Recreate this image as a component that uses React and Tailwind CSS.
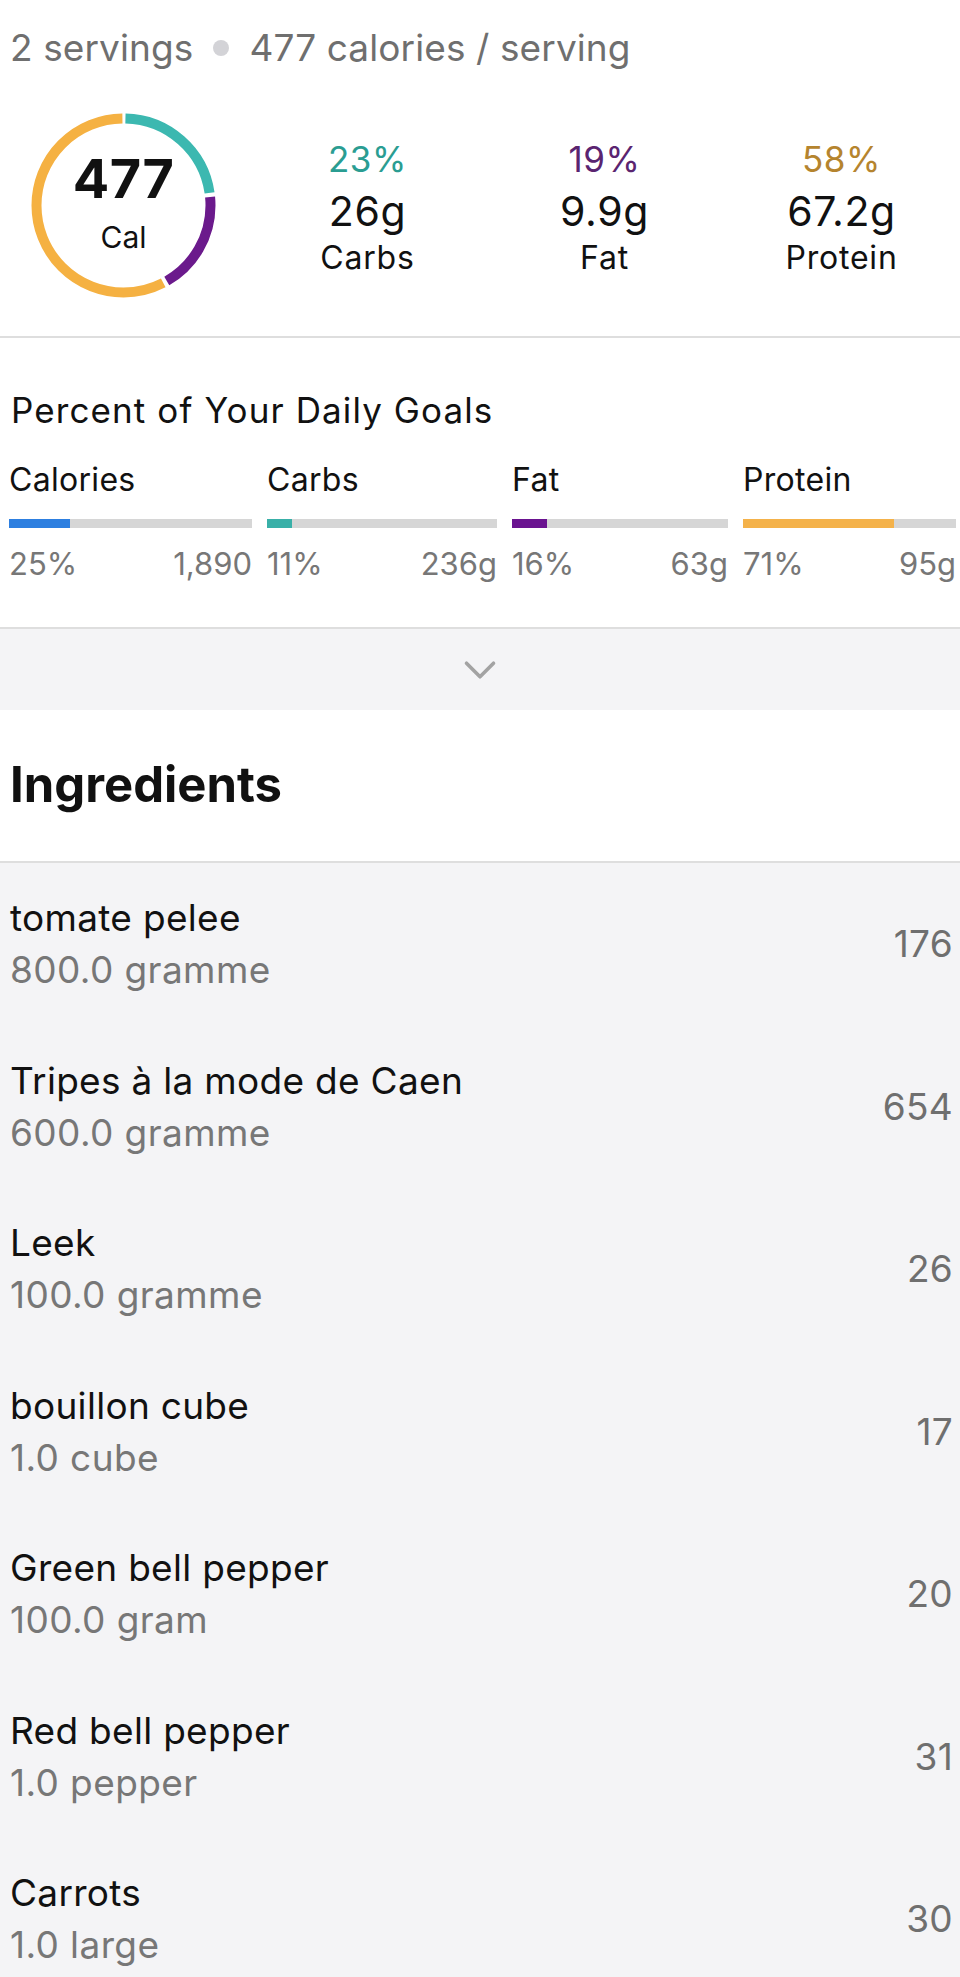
import { ChevronDown } from 'lucide-react'

const macros = [
  { pct: '23%', grams: '26g', label: 'Carbs', color: 'text-[#2a9d92]' },
  { pct: '19%', grams: '9.9g', label: 'Fat', color: 'text-[#5a2470]' },
  { pct: '58%', grams: '67.2g', label: 'Protein', color: 'text-[#b5842e]' },
]

const goals = [
  { label: 'Calories', pct: 25, goal: '1,890', fill: 'bg-[#2d7fe0]', width: 'w-[243px]' },
  { label: 'Carbs', pct: 11, goal: '236g', fill: 'bg-[#39b0a8]', width: 'w-[230px]' },
  { label: 'Fat', pct: 16, goal: '63g', fill: 'bg-[#6a1390]', width: 'w-[216px]' },
  { label: 'Protein', pct: 71, goal: '95g', fill: 'bg-[#f4b24a]', width: 'w-[213px]' },
]

const ingredients = [
  { name: 'tomate pelee', amount: '800.0 gramme', cal: 176 },
  { name: 'Tripes à la mode de Caen', amount: '600.0 gramme', cal: 654 },
  { name: 'Leek', amount: '100.0 gramme', cal: 26 },
  { name: 'bouillon cube', amount: '1.0 cube', cal: 17 },
  { name: 'Green bell pepper', amount: '100.0 gram', cal: 20 },
  { name: 'Red bell pepper', amount: '1.0 pepper', cal: 31 },
  { name: 'Carrots', amount: '1.0 large', cal: 30 },
]

// ring segments: carbs, fat, protein (share of calories)
const segments = [
  { share: 0.23, color: '#3cb8b0' },
  { share: 0.19, color: '#6b1a8c' },
  { share: 0.58, color: '#f5b142' },
]

function CalorieRing() {
  const r = 87
  const c = 2 * Math.PI * r
  const gap = 4
  let start = 0
  return (
    <div className="relative w-[185px] h-[185px]">
      <svg width="185" height="185" viewBox="0 0 185 185" className="-rotate-90">
        {segments.map((s) => {
          const len = s.share * c
          const el = (
            <circle
              key={s.color}
              cx="92.5"
              cy="92.5"
              r={r}
              fill="none"
              stroke={s.color}
              strokeWidth="10"
              strokeDasharray={`${len - gap} ${c}`}
              strokeDashoffset={-(start + gap / 2)}
            />
          )
          start += len
          return el
        })}
      </svg>
      <div className="absolute inset-0 flex flex-col items-center justify-center pb-[4px]">
        <span className="text-[54px] leading-[56px] font-bold text-[#111] tracking-[0.3px]">477</span>
        <span className="text-[30px] leading-[40px] mt-[10px] text-[#111]">Cal</span>
      </div>
    </div>
  )
}

export default function App() {
  return (
    <div className="bg-white font-['Inter',sans-serif] text-[#111] min-h-[1977px]">
      {/* summary */}
      <div className="pt-[24px] pb-[38px] border-b-2 border-[#dedede]">
        <div className="flex items-center px-[10px] text-[37px] leading-[48px] text-[#6f6f6f] tracking-[0.1px]">
          <span>2 servings</span>
          <span className="w-[16px] h-[16px] rounded-full bg-[#d3d3d7] mx-[20px]" />
          <span>477 calories / serving</span>
        </div>
        <div className="flex items-center mt-[41px]">
          <div className="w-[249px] pl-[31px]">
            <CalorieRing />
          </div>
          {macros.map((m) => (
            <div key={m.label} className="flex-1 flex flex-col items-center">
              <span className={`text-[35px] leading-[46px] tracking-[0.6px] ${m.color}`}>{m.pct}</span>
              <span className="text-[41px] leading-[58px] tracking-[0.6px]">{m.grams}</span>
              <span className="text-[32px] leading-[36px] tracking-[0.8px]">{m.label}</span>
            </div>
          ))}
        </div>
      </div>

      {/* daily goals */}
      <div className="pt-[50px] pb-[43px] pl-[9px] pr-[4px] border-b-2 border-[#dedede]">
        <h2 className="text-[35px] leading-[44px] px-[2px] tracking-[1.1px]">Percent of Your Daily Goals</h2>
        <div className="flex gap-[15px] mt-[27px]">
          {goals.map((g) => (
            <div key={g.label} className={`${g.width} shrink-0`}>
              <div className="text-[32px] leading-[42px] tracking-[0.3px]">{g.label}</div>
              <div className="h-[9px] bg-[#d6d6d6] mt-[18px]">
                <div className={`h-full ${g.fill}`} style={{ width: `${g.pct}%` }} />
              </div>
              <div className="flex justify-between mt-[16px] text-[31px] leading-[40px] text-[#777]">
                <span>{g.pct}%</span>
                <span>{g.goal}</span>
              </div>
            </div>
          ))}
        </div>
      </div>

      {/* expand */}
      <div className="h-[81px] bg-[#f4f4f6] flex items-center justify-center">
        <ChevronDown className="w-[54px] h-[54px] text-[#a3a3a3]" strokeWidth={1.6} />
      </div>

      {/* ingredients */}
      <div className="pt-[45px] pb-[46px] px-[10px] border-b-2 border-[#dedede]">
        <h2 className="text-[49px] leading-[60px] font-bold tracking-[0px]">Ingredients</h2>
      </div>
      <div className="bg-[#f4f4f6]">
        {ingredients.map((i) => (
          <div key={i.name} className="h-[162.5px] flex items-center justify-between pl-[10px] pr-[7px]">
            <div>
              <div className="text-[37px] leading-[52px] tracking-[0.3px]">{i.name}</div>
              <div className="text-[37px] leading-[52px] text-[#777] tracking-[0.4px]">{i.amount}</div>
            </div>
            <div className="text-[37px] leading-[52px] text-[#6f6f6f] tracking-[0.3px]">{i.cal}</div>
          </div>
        ))}
      </div>
    </div>
  )
}
